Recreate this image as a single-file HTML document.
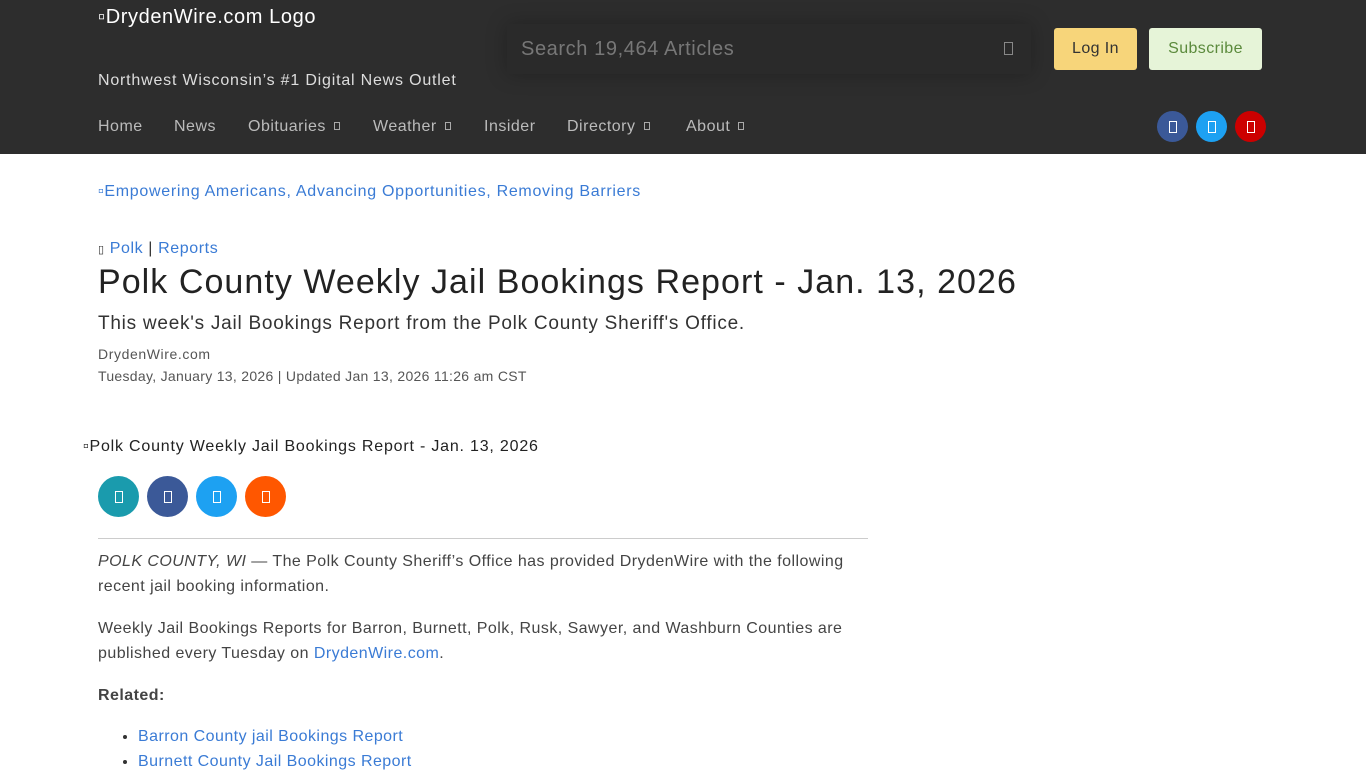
<!DOCTYPE html>
<html><head><meta charset="utf-8"><style>
*{box-sizing:border-box;margin:0;padding:0}
body{width:1366px;height:768px;overflow:hidden;font-family:"Liberation Sans",sans-serif;background:#fff;color:#333;letter-spacing:0.6px}
.hdr{position:absolute;left:0;top:0;width:1366px;height:154px;background:#2d2d2d}
.abs{position:absolute;white-space:nowrap}
.logo{left:98px;top:6px;font-size:20px;color:#fff}
.tag{left:98px;top:72px;font-size:16px;color:#ddd;letter-spacing:0.8px}
.search{left:507px;top:24px;width:524px;height:50px;background:#2a2a2a;box-shadow:0 0 20px rgba(0,0,0,.25);color:#777;font-size:20px;padding:14px 14px}
.btn{top:28px;height:42px;border-radius:3px;font-size:16px;text-align:center;line-height:42px;letter-spacing:0.4px}
.nav{top:118px;font-size:16px;color:#bbb;letter-spacing:0.5px}
.nav span.c{font-size:10px;margin-left:8px;border:1px solid #aaa;display:inline-block;width:6px;height:8px;vertical-align:1px}
.circ{border-radius:50%;display:inline-block}
.sq{position:absolute;left:50%;top:50%;width:8px;height:12px;border:1.5px solid #fff;transform:translate(-50%,-50%)}
a{color:#3a7bd5;text-decoration:none}
p{font-size:16px;line-height:25px;color:#444}
</style></head><body>
<div class="hdr"></div>
<div class="abs logo">▫DrydenWire.com Logo</div>
<div class="abs tag">Northwest Wisconsin’s #1 Digital News Outlet</div>
<div class="abs search">Search 19,464 Articles<span style="position:absolute;right:18px;top:18px;width:9px;height:13px;border:1px solid #888"></span></div>
<div class="abs btn" style="left:1054px;width:83px;background:#f7d57a;color:#333">Log In</div>
<div class="abs btn" style="left:1149px;width:113px;background:#e6f4d8;color:#5b8a3c">Subscribe</div>
<div class="abs nav" style="left:98px">Home</div>
<div class="abs nav" style="left:174px">News</div>
<div class="abs nav" style="left:248px">Obituaries<span class="c"></span></div>
<div class="abs nav" style="left:373px">Weather<span class="c"></span></div>
<div class="abs nav" style="left:484px">Insider</div>
<div class="abs nav" style="left:567px">Directory<span class="c"></span></div>
<div class="abs nav" style="left:686px">About<span class="c"></span></div>
<div class="abs circ" style="left:1157px;top:111px;width:31px;height:31px;background:#3b5998"><i class="sq"></i></div>
<div class="abs circ" style="left:1196px;top:111px;width:31px;height:31px;background:#1da1f2"><i class="sq"></i></div>
<div class="abs circ" style="left:1235px;top:111px;width:31px;height:31px;background:#c00"><i class="sq"></i></div>

<div class="abs" style="left:98px;top:183px;font-size:16px;letter-spacing:0.7px"><a>▫Empowering Americans, Advancing Opportunities, Removing Barriers</a></div>
<div class="abs" style="left:98px;top:240px;font-size:16px;color:#333"><span style="font-size:11px">▯</span> <a>Polk</a> | <a>Reports</a></div>
<div class="abs" style="left:98px;top:263px;font-size:34px;color:#222;letter-spacing:1.05px">Polk County Weekly Jail Bookings Report - Jan. 13, 2026</div>
<div class="abs" style="left:98px;top:313px;font-size:19px;color:#333;letter-spacing:0.75px">This week's Jail Bookings Report from the Polk County Sheriff's Office.</div>
<div class="abs" style="left:98px;top:346px;font-size:14px;color:#555">DrydenWire.com</div>
<div class="abs" style="left:98px;top:368px;font-size:14px;color:#555;letter-spacing:0.3px">Tuesday, January 13, 2026 | Updated Jan 13, 2026 11:26 am CST</div>
<div class="abs" style="left:83px;top:438px;font-size:16px;color:#222;letter-spacing:0.8px">▫Polk County Weekly Jail Bookings Report - Jan. 13, 2026</div>
<div class="abs circ" style="left:98px;top:476px;width:41px;height:41px;background:#1a9bad"><i class="sq"></i></div>
<div class="abs circ" style="left:147px;top:476px;width:41px;height:41px;background:#3b5998"><i class="sq"></i></div>
<div class="abs circ" style="left:196px;top:476px;width:41px;height:41px;background:#1da1f2"><i class="sq"></i></div>
<div class="abs circ" style="left:245px;top:476px;width:41px;height:41px;background:#ff5700"><i class="sq"></i></div>
<div class="abs" style="left:98px;top:538px;width:770px;height:1px;background:#ccc"></div>
<div class="abs" style="left:98px;top:549px;width:775px;white-space:normal;letter-spacing:0.45px">
<p><i>POLK COUNTY, WI</i> — The Polk County Sheriff’s Office has provided DrydenWire with the following recent jail booking information.</p>
<p style="margin-top:17px">Weekly Jail Bookings Reports for Barron, Burnett, Polk, Rusk, Sawyer, and Washburn Counties are published every Tuesday on <a>DrydenWire.com</a>.</p>
<p style="margin-top:17px"><b>Related:</b></p>
<ul style="margin-top:16px;padding-left:40px;font-size:16px;line-height:25px;color:#333">
<li><a>Barron County jail Bookings Report</a></li>
<li><a>Burnett County Jail Bookings Report</a></li>
</ul></div>
</body></html>
